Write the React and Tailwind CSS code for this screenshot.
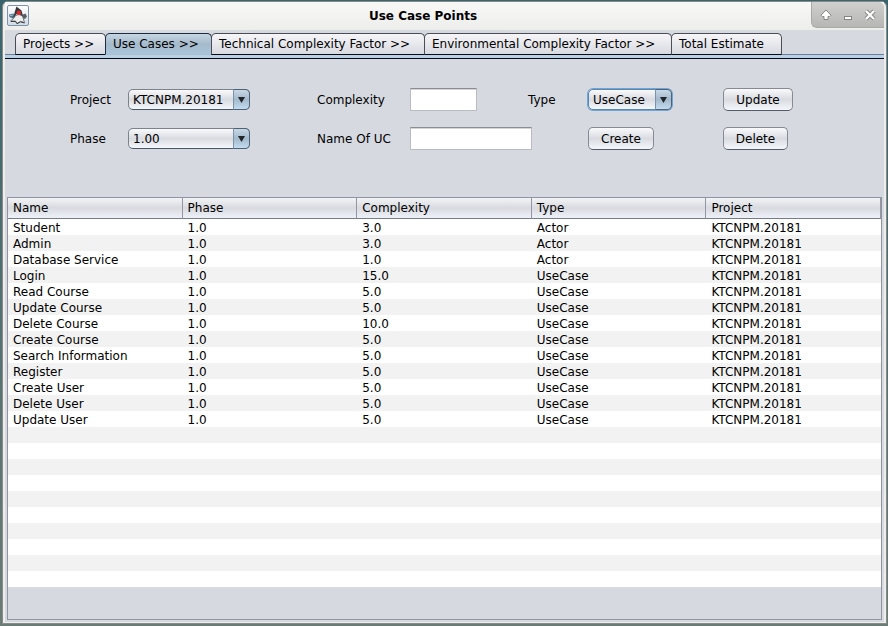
import React from "react";

const tabs = [
  { label: "Projects >>", width: "w-[91px]" },
  { label: "Use Cases >>", width: "w-[107px]", active: true },
  { label: "Technical Complexity Factor >>", width: "w-[214px]" },
  { label: "Environmental Complexity Factor >>", width: "w-[248px]" },
  { label: "Total Estimate", width: "w-[111px]" },
];

const columns = ["Name", "Phase", "Complexity", "Type", "Project"];

const rows = [
  ["Student", "3.0", "Actor"],
  ["Admin", "3.0", "Actor"],
  ["Database Service", "1.0", "Actor"],
  ["Login", "15.0", "UseCase"],
  ["Read Course", "5.0", "UseCase"],
  ["Update Course", "5.0", "UseCase"],
  ["Delete Course", "10.0", "UseCase"],
  ["Create Course", "5.0", "UseCase"],
  ["Search Information", "5.0", "UseCase"],
  ["Register", "5.0", "UseCase"],
  ["Create User", "5.0", "UseCase"],
  ["Delete User", "5.0", "UseCase"],
  ["Update User", "5.0", "UseCase"],
].map(([name, complexity, type]) => [name, "1.0", complexity, type, "KTCNPM.20181"]);

const emptyRows = Array.from({ length: 10 });

function JavaIcon() {
  return (
    <svg width="22" height="21" viewBox="0 0 22 21" aria-hidden="true">
      <defs>
        <linearGradient id="tile" x1="0" y1="0" x2="0" y2="1">
          <stop offset="0" stopColor="#ffffff" />
          <stop offset="1" stopColor="#d0dae6" />
        </linearGradient>
      </defs>
      <rect x="0.5" y="0.5" width="21" height="20" rx="1.5" fill="url(#tile)" stroke="#7f93a8" />
      <path d="M2 9.500L6.500 8.500 8 12 6 13.500 2.500 12z" fill="#4f7186" />
      <path d="M3 10l3-.5v1l-3 .5z" fill="#a7c6d8" />
      <path d="M15 10l3.500-1.500 1.500 3-2 2.500-2.500-1z" fill="#5a5f64" />
      <path d="M9.500 1.500L14.500 5.500 16 11 14.500 11 12.500 9 9.500 9 7.500 12 6.500 12 8 6z" fill="#35383b" />
      <path d="M8.500 10.500L12 9.500 15.500 11 17.500 17.500 13.500 16.500 10 18.500 8.500 16 3.500 16 7 13z" fill="#eceded" stroke="#55595c" strokeWidth="0.8" />
      <path d="M4 16.500h4.500l1.500 2.200 3.500-1.900 4 1.200" fill="none" stroke="#3c3f42" strokeWidth="1" />
      <circle cx="11.800" cy="7.800" r="2.200" fill="#e0262b" />
    </svg>
  );
}

function WindowControls() {
  return (
    <div className="flex h-[26px] w-[73px] items-center justify-between rounded-tr-[5px] rounded-bl-[6px] border-b border-l border-[#a9a9a7] bg-linear-to-b from-[#d0d0ce] to-[#b6b6b4] px-[8px]">
      <button type="button" aria-label="Maximize">
        <svg width="12" height="12" viewBox="0 0 12 12" className="block">
          <path d="M6 1L11 6.200 9.800 7.500H8V10.500H4V7.500H2.200L1 6.200z" fill="#fff" stroke="#858583" strokeLinejoin="round" />
          <path d="M4.500 5.500L2.800 7M7.500 5.500L9.200 7" stroke="#fff" />
        </svg>
      </button>
      <button type="button" aria-label="Minimize">
        <svg width="10" height="12" viewBox="0 0 10 12" className="block">
          <rect x="1.500" y="7.500" width="7" height="3" fill="#fff" stroke="#858583" />
        </svg>
      </button>
      <button type="button" aria-label="Close">
        <svg width="12" height="12" viewBox="0 0 12 12" className="block">
          <path d="M2 2l8 8M10 2l-8 8" stroke="#858583" strokeWidth="4.200" />
          <path d="M2 2l8 8M10 2l-8 8" stroke="#fff" strokeWidth="2.400" />
        </svg>
      </button>
    </div>
  );
}

function Combo({ id, value, width, focused }) {
  return (
    <div
      className={
        "relative h-[21px] " +
        width +
        (focused ? " rounded-[5px] ring-1 ring-[#73a4d1]" : "")
      }
    >
      <select
        id={id}
        defaultValue={value}
        className={
          "block h-full w-full appearance-none rounded-[5px] border bg-linear-to-b from-[#fafafc] via-[#d9dbe1] to-[#f4f7fb] pr-[18px] pl-[4px] leading-[18px] outline-none " +
          (focused ? "border-[#5788b5]" : "border-[#7c828c] border-b-[#4b5664]")
        }
      >
        <option>{value}</option>
      </select>
      <span className="pointer-events-none absolute inset-y-0 right-0 flex w-[17px] items-center justify-center rounded-r-[5px] border border-[#4d6379] border-l-[#7a93ab] bg-linear-to-b from-[#c8d8e6] via-[#a3b9cc] to-[#c4dcf0]">
        <svg width="7" height="6" viewBox="0 0 7 6" aria-hidden="true">
          <path d="M0 0h7L3.500 6z" fill="#222529" />
        </svg>
      </span>
    </div>
  );
}

function PushButton({ children, width }) {
  return (
    <button
      type="button"
      className={
        "h-[23px] rounded-[5px] border border-[#858a93] border-b-[#555b65] bg-linear-to-b from-[#fafafc] via-[#d9dbe1] to-[#f4f7fb] " +
        width
      }
    >
      {children}
    </button>
  );
}

function Field({ id, width }) {
  return (
    <input
      id={id}
      type="text"
      className={
        "h-[23px] border border-[#b9bbc0] border-t-[#8c8d90] bg-white px-[5px] shadow-[inset_0_1px_0_#d5d5d7] outline-none " +
        width
      }
    />
  );
}

export default function App() {
  return (
    <div className="flex min-h-screen flex-col bg-linear-to-b from-[#3a646d] to-[#6b7b76] pt-px pr-px pb-[2px] pl-[2px] font-['DejaVu_Sans',sans-serif] text-[12px] leading-[16px] text-black">
      <div className="flex grow flex-col rounded-t-[6px] border border-[#858b88] bg-[#ededeb] px-[2px] pb-px">
        <header className="grid h-[28px] grid-cols-[30px_1fr_73px] bg-linear-to-b from-[#f8f8f7] to-[#ededeb]">
          <div className="pt-[3px] pl-[2px]">
            <JavaIcon />
          </div>
          <h1 className="pt-[6px] text-center font-bold">Use Case Points</h1>
          <WindowControls />
        </header>

        <main className="flex grow flex-col bg-[#d6d9e0]">
          <nav
            role="tablist"
            className="flex h-[25px] items-end border-b border-[#6d7f9b] pt-[3px] pl-[10px]"
          >
            {tabs.map((tab) => (
              <button
                key={tab.label}
                type="button"
                role="tab"
                aria-selected={Boolean(tab.active)}
                className={
                  "-mr-px -mb-px h-[22px] rounded-t-[5px] border pl-[7px] text-left whitespace-nowrap " +
                  tab.width +
                  (tab.active
                    ? " border-[#1c2c40] border-b-[#a9c0d4] bg-linear-to-b from-[#c6d6e3] via-[#a5bacb] to-[#a9c4da]"
                    : " border-[#4a4d55] border-b-[#0a0a18] bg-linear-to-b from-[#f6f6f9] to-[#d9dae0]")
                }
              >
                {tab.label}
              </button>
            ))}
          </nav>
          <div className="h-[4px] border-b border-[#05051a] bg-[#b9cfe2]" />

          <form
            className="grid auto-rows-[23px] grid-cols-[58px_189px_93px_118px_60px_135px_auto] items-center gap-y-[16px] pt-[29px] pb-[47px] pl-[65px]"
            onSubmit={(e) => e.preventDefault()}
          >
            <label htmlFor="project">Project</label>
            <Combo id="project" value="KTCNPM.20181" width="w-[122px]" />
            <label htmlFor="complexity">Complexity</label>
            <Field id="complexity" width="w-[67px]" />
            <label htmlFor="type">Type</label>
            <Combo id="type" value="UseCase" width="w-[84px]" focused />
            <PushButton width="w-[70px]">Update</PushButton>

            <label htmlFor="phase">Phase</label>
            <Combo id="phase" value="1.00" width="w-[122px]" />
            <label htmlFor="uc-name">Name Of UC</label>
            <Field id="uc-name" width="w-[122px]" />
            <span />
            <PushButton width="w-[66px]">Create</PushButton>
            <PushButton width="w-[65px]">Delete</PushButton>
          </form>

          <section className="mx-[2px] mb-[2px] grow border border-[#8f94a0]">
            <table className="w-full table-fixed border-separate border-spacing-0 text-left">
              <thead>
                <tr>
                  {columns.map((column) => (
                    <th
                      key={column}
                      className="h-[21px] border-r border-b border-r-[#9297a1] border-b-[#767b88] bg-linear-to-b from-[#f3f4f7] via-[#d8dae0] to-[#eef2f8] pl-[5px] font-normal"
                    >
                      {column}
                    </th>
                  ))}
                </tr>
              </thead>
              <tbody>
                {rows.map((row) => (
                  <tr key={row[0]} className="h-[16px] odd:bg-white even:bg-[#f2f2f2]">
                    {row.map((cell, i) => (
                      <td key={columns[i]} className="pt-[2px] pl-[5px] leading-[14px]">
                        {cell}
                      </td>
                    ))}
                  </tr>
                ))}
                {emptyRows.map((_, i) => (
                  <tr key={i} className="h-[16px] odd:bg-white even:bg-[#f2f2f2]">
                    <td colSpan={5} />
                  </tr>
                ))}
              </tbody>
            </table>
          </section>
        </main>
      </div>
    </div>
  );
}
